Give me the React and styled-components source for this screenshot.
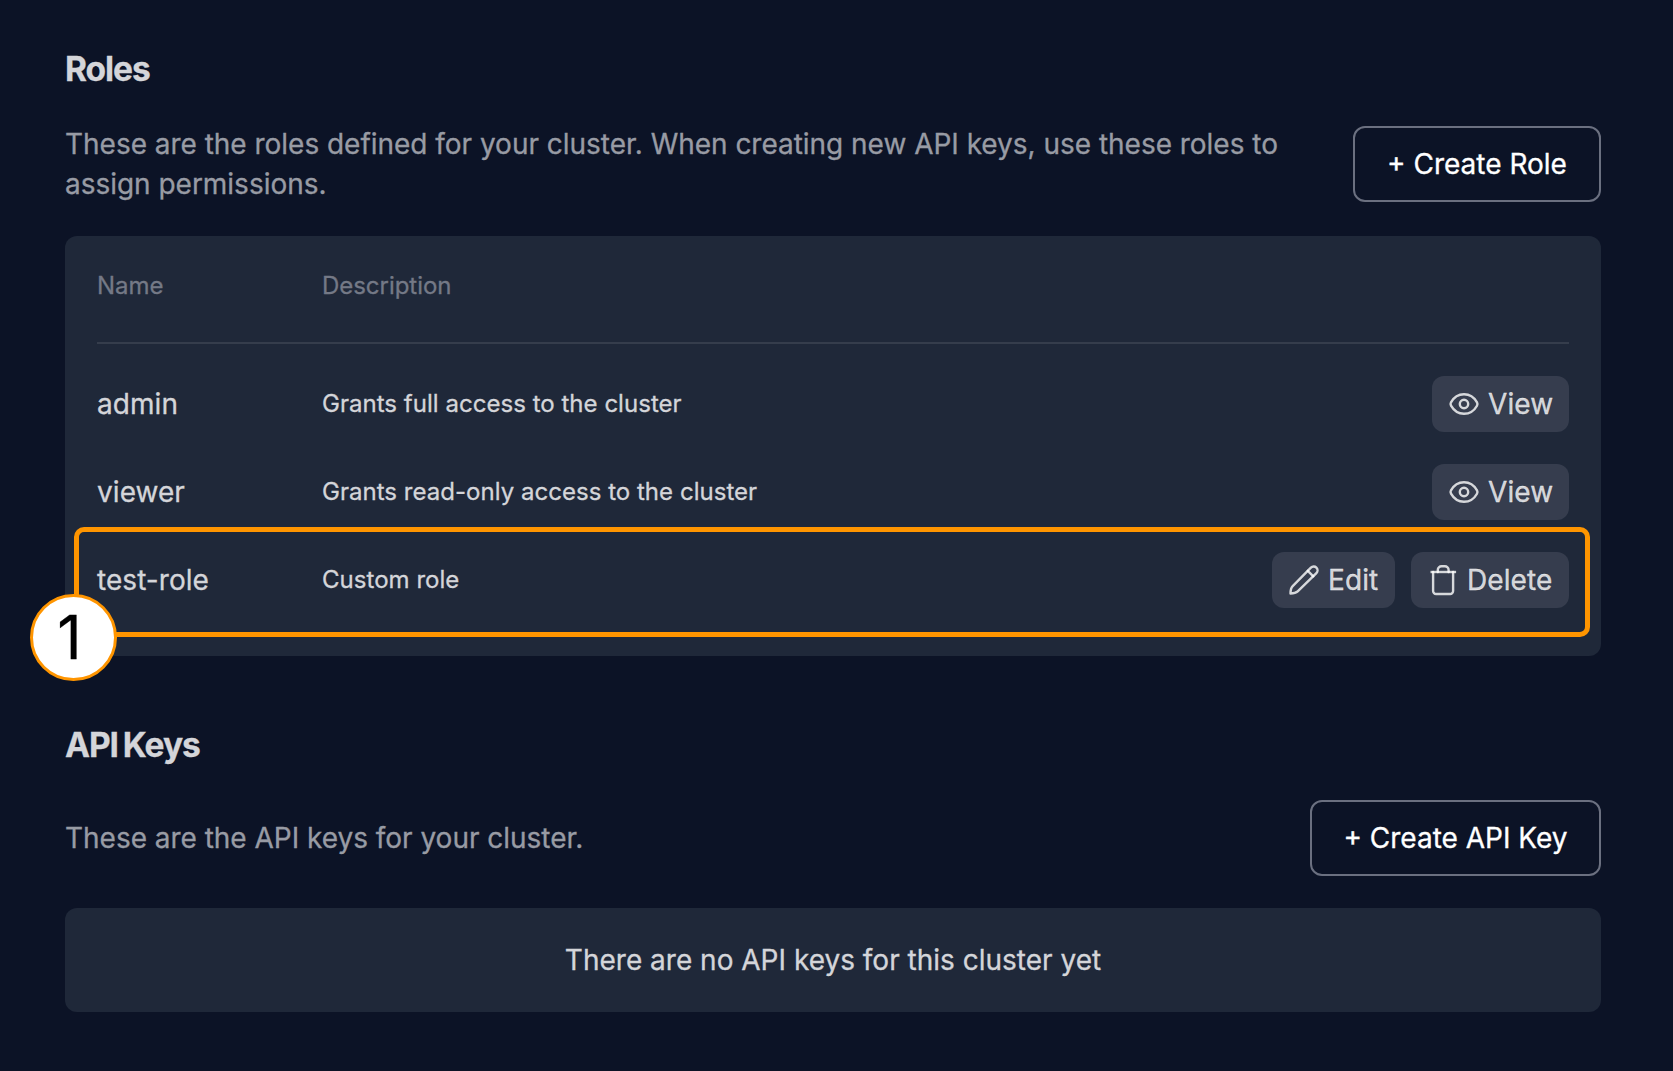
import React from "react";
import styled, { createGlobalStyle } from "styled-components";

const Global = createGlobalStyle`
  * { box-sizing: border-box; }
  body { margin: 0; background: #0c1326; font-family: Inter, "Liberation Sans", sans-serif; }
`;

const Page = styled.main`
  min-height: 1071px;
  padding: 47px 72px 59px 65px;
  color: #d4d5d9;
  -webkit-text-stroke: 0.3px currentColor;
`;

const Section = styled.section`
  display: flex;
  flex-direction: column;
  margin-bottom: ${(p) => p.$gap || 0}px;
`;

const Title = styled.h2`
  margin: 0;
  height: 45px;
  line-height: 44px;
  font-size: 33.5px;
  font-weight: 700;
  letter-spacing: -1.05px;
  word-spacing: ${(p) => p.$wordGap || "normal"};
  white-space: nowrap;
`;

const Intro = styled.div`
  display: flex;
  align-items: center;
  justify-content: space-between;
  margin: 32px 0;
`;

const Lead = styled.p`
  margin: 0;
  width: 1224px;
  font-size: 28px;
  line-height: 40px;
  letter-spacing: -0.024px;
  color: #989ba4;
`;

const OutlineButton = styled.button`
  flex: none;
  width: ${(p) => p.$width}px;
  height: 76px;
  padding: 0;
  border: 2px solid #6b7080;
  border-radius: 12px;
  background: transparent;
  color: #fff;
  font: 400 28px Inter, sans-serif;
  white-space: nowrap;
  -webkit-text-stroke: 0.3px currentColor;
`;

const Card = styled.div`
  position: relative;
  border-radius: 12px;
  background: #1f2839;
`;

const RoleCard = styled(Card)`
  height: 420px;
  padding: 32px;
`;

const HeaderRow = styled.div`
  display: grid;
  grid-template-columns: 225px 1fr;
  height: 76px;
  border-bottom: 2px solid #353d4c;
  margin-bottom: 16px;
  font-size: 24px;
  line-height: 36px;
  letter-spacing: -0.04px;
  color: #747986;
`;

const Row = styled.div`
  display: grid;
  grid-template-columns: 225px 1fr auto;
  align-items: center;
  height: 88px;
`;

const Name = styled.span`
  font-size: 28px;
  line-height: 40px;
  letter-spacing: 0.06px;
`;

const Description = styled.span`
  font-size: 24px;
  line-height: 36px;
  letter-spacing: 0.03px;
`;

const Actions = styled.div`
  display: flex;
  gap: 16px;
`;

const ActionButton = styled.button`
  display: flex;
  align-items: center;
  gap: 8px;
  width: ${(p) => p.$width}px;
  height: 56px;
  padding: 0 0 0 16px;
  border: 0;
  border-radius: 12px;
  background: #363d4e;
  color: rgba(255, 255, 255, 0.8);
  font: 400 28px Inter, sans-serif;
  letter-spacing: 0.1px;
  white-space: nowrap;
  -webkit-text-stroke: 0.3px currentColor;

  svg { flex: none; }
`;

const Empty = styled(Card)`
  display: flex;
  align-items: center;
  justify-content: center;
  height: 104px;
  font-size: 28px;
`;

const Highlight = styled.div`
  position: absolute;
  left: 9px;
  top: 291px;
  width: 1516px;
  height: 110px;
  border: 5px solid #ff9500;
  border-radius: 10px;
  pointer-events: none;
`;

const Marker = styled.div`
  position: absolute;
  left: -35px;
  top: 358px;
  display: flex;
  align-items: center;
  justify-content: center;
  width: 87px;
  height: 87px;
  padding: 0 8px 1px 0;
  border: 3px solid #ff9500;
  border-radius: 50%;
  background: #fff;
  color: #000;
  font-size: 60px;
  line-height: 1;
`;

const Svg = ({ children }) => (
  <svg width="32" height="32" viewBox="0 0 32 32" fill="none" stroke="currentColor" strokeWidth="2.4" strokeLinecap="round" strokeLinejoin="round">
    {children}
  </svg>
);

const icons = {
  View: (
    <Svg>
      <path d="M3 14.300C6 9 10.500 6.200 16 6.200S26 9 29 14.300c.6 1.100.6 2.300 0 3.400C26 23 21.500 25.800 16 25.800S6 23 3 17.700c-.6-1.100-.6-2.300 0-3.400Z" />
      <circle cx="16" cy="16" r="4.200" />
    </Svg>
  ),
  Edit: (
    <Svg>
      <path d="M2.500 29.500C2.500 27 3 23.800 4.700 22.100L22.900 3.600a3.850 3.850 0 0 1 5.500 5.500L9.700 27.400C8 29 5 29.500 2.500 29.500Z" />
      <path d="M19.800 6.800l5.500 5.500" />
    </Svg>
  ),
  Delete: (
    <Svg>
      <path d="M3.500 8h25.600" strokeLinecap="butt" />
      <path d="M10.800 8V6a3.800 3.800 0 0 1 3.800-3.800h3.200A3.800 3.800 0 0 1 21.600 6v2" />
      <path d="M6.100 8v19a3 3 0 0 0 3 3h14a3 3 0 0 0 3-3V8" />
    </Svg>
  ),
};

const widths = { View: 137, Edit: 123, Delete: 158 };

const roles = [
  { name: "admin", text: "Grants full access to the cluster", actions: ["View"] },
  { name: "viewer", text: "Grants read-only access to the cluster", actions: ["View"] },
  { name: "test-role", text: "Custom role", actions: ["Edit", "Delete"] },
];

export default function App() {
  return (
    <Page>
      <Global />
      <Section $gap={67}>
        <Title>Roles</Title>
        <Intro>
          <Lead>
            These are the roles defined for your cluster. When creating new API keys, use these roles to assign permissions.
          </Lead>
          <OutlineButton $width={248}>+ Create Role</OutlineButton>
        </Intro>
        <RoleCard>
          <HeaderRow>
            <span>Name</span>
            <span>Description</span>
          </HeaderRow>
          {roles.map((role) => (
            <Row key={role.name}>
              <Name>{role.name}</Name>
              <Description>{role.text}</Description>
              <Actions>
                {role.actions.map((a) => (
                  <ActionButton key={a} $width={widths[a]}>
                    {icons[a]}
                    {a}
                  </ActionButton>
                ))}
              </Actions>
            </Row>
          ))}
          <Highlight />
          <Marker>1</Marker>
        </RoleCard>
      </Section>
      <Section>
        <Title $wordGap="-2px">API Keys</Title>
        <Intro>
          <Lead>These are the API keys for your cluster.</Lead>
          <OutlineButton $width={291}>+ Create API Key</OutlineButton>
        </Intro>
        <Empty>There are no API keys for this cluster yet</Empty>
      </Section>
    </Page>
  );
}
